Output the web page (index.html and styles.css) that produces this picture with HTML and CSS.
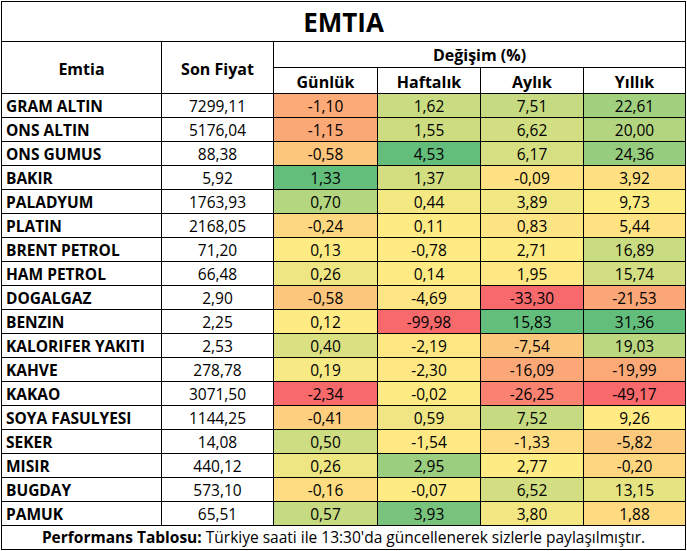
FILE: index.html
```html
<!DOCTYPE html>
<html lang="tr">
<head>
<meta charset="utf-8">
<title>EMTIA</title>
<link rel="stylesheet" href="styles.css">
</head>
<body>
<div class="sheet">
  <div class="title">EMTIA</div>
  <div class="hd hd-name">Emtia</div>
  <div class="hd hd-price">Son Fiyat</div>
  <div class="hd hd-change">Değişim (%)</div>
  <div class="hd sub">Günlük</div>
  <div class="hd sub">Haftalık</div>
  <div class="hd sub">Aylık</div>
  <div class="hd sub">Yıllık</div>

  <div class="row"><div class="name">GRAM ALTIN</div><div class="price">7299,11</div><div class="v">-1,10</div><div class="v">1,62</div><div class="v">7,51</div><div class="v">22,61</div></div>
  <div class="row"><div class="name">ONS ALTIN</div><div class="price">5176,04</div><div class="v">-1,15</div><div class="v">1,55</div><div class="v">6,62</div><div class="v">20,00</div></div>
  <div class="row"><div class="name">ONS GUMUS</div><div class="price">88,38</div><div class="v">-0,58</div><div class="v">4,53</div><div class="v">6,17</div><div class="v">24,36</div></div>
  <div class="row"><div class="name">BAKIR</div><div class="price">5,92</div><div class="v">1,33</div><div class="v">1,37</div><div class="v">-0,09</div><div class="v">3,92</div></div>
  <div class="row"><div class="name">PALADYUM</div><div class="price">1763,93</div><div class="v">0,70</div><div class="v">0,44</div><div class="v">3,89</div><div class="v">9,73</div></div>
  <div class="row"><div class="name">PLATIN</div><div class="price">2168,05</div><div class="v">-0,24</div><div class="v">0,11</div><div class="v">0,83</div><div class="v">5,44</div></div>
  <div class="row"><div class="name">BRENT PETROL</div><div class="price">71,20</div><div class="v">0,13</div><div class="v">-0,78</div><div class="v">2,71</div><div class="v">16,89</div></div>
  <div class="row"><div class="name">HAM PETROL</div><div class="price">66,48</div><div class="v">0,26</div><div class="v">0,14</div><div class="v">1,95</div><div class="v">15,74</div></div>
  <div class="row"><div class="name">DOGALGAZ</div><div class="price">2,90</div><div class="v">-0,58</div><div class="v">-4,69</div><div class="v">-33,30</div><div class="v">-21,53</div></div>
  <div class="row"><div class="name">BENZIN</div><div class="price">2,25</div><div class="v">0,12</div><div class="v">-99,98</div><div class="v">15,83</div><div class="v">31,36</div></div>
  <div class="row"><div class="name">KALORIFER YAKITI</div><div class="price">2,53</div><div class="v">0,40</div><div class="v">-2,19</div><div class="v">-7,54</div><div class="v">19,03</div></div>
  <div class="row"><div class="name">KAHVE</div><div class="price">278,78</div><div class="v">0,19</div><div class="v">-2,30</div><div class="v">-16,09</div><div class="v">-19,99</div></div>
  <div class="row"><div class="name">KAKAO</div><div class="price">3071,50</div><div class="v">-2,34</div><div class="v">-0,02</div><div class="v">-26,25</div><div class="v">-49,17</div></div>
  <div class="row"><div class="name">SOYA FASULYESI</div><div class="price">1144,25</div><div class="v">-0,41</div><div class="v">0,59</div><div class="v">7,52</div><div class="v">9,26</div></div>
  <div class="row"><div class="name">SEKER</div><div class="price">14,08</div><div class="v">0,50</div><div class="v">-1,54</div><div class="v">-1,33</div><div class="v">-5,82</div></div>
  <div class="row"><div class="name">MISIR</div><div class="price">440,12</div><div class="v">0,26</div><div class="v">2,95</div><div class="v">2,77</div><div class="v">-0,20</div></div>
  <div class="row"><div class="name">BUGDAY</div><div class="price">573,10</div><div class="v">-0,16</div><div class="v">-0,07</div><div class="v">6,52</div><div class="v">13,15</div></div>
  <div class="row"><div class="name">PAMUK</div><div class="price">65,51</div><div class="v">0,57</div><div class="v">3,93</div><div class="v">3,80</div><div class="v">1,88</div></div>

  <div class="foot"><b>Performans Tablosu:</b> Türkiye saati ile 13:30'da güncellenerek sizlerle paylaşılmıştır.</div>
</div>
<script src="script.js"></script>
</body>
</html>
```

FILE: styles.css
```css
html, body {
  margin: 0;
  background: #ffffff;
}
body {
  padding: 1px 0 0 1px;
  font-family: "Open Sans", "Liberation Sans", sans-serif;
  color: #000000;
}
.sheet {
  display: grid;
  box-sizing: border-box;
  width: 685px;
  grid-template-columns: 159px 111px 103px 102px 102px 101px;
  grid-template-rows: 39px 25px 25px repeat(18, 23px) 23px;
  gap: 1px;
  padding: 1px;
  background: #000000;
}
.sheet > div:not(.row),
.row > div {
  background: #ffffff;
  overflow: hidden;
  white-space: nowrap;
}
.row {
  display: contents;
}
.title {
  grid-column: 1 / -1;
  text-align: center;
  font-weight: 700;
  font-size: 26px;
  line-height: 39px;
  padding-top: 1px;
  box-sizing: border-box;
}
.hd {
  display: flex;
  align-items: center;
  justify-content: center;
  font-weight: 700;
  font-size: 16px;
}
.hd-name {
  grid-column: 1;
  grid-row: 2 / 4;
  padding-top: 2px;
}
.hd-price {
  grid-column: 2;
  grid-row: 2 / 4;
  padding-top: 2px;
}
.hd-change {
  grid-column: 3 / 7;
  grid-row: 2;
}
.sub {
  grid-row: 3;
  padding-top: 2px;
}
.name,
.price,
.v {
  font-size: 15.5px;
  line-height: 22px;
  padding-top: 1px;
}
.name {
  font-weight: 700;
  padding-left: 4px;
}
.price,
.v {
  text-align: center;
}
.foot {
  grid-column: 1 / -1;
  text-align: center;
  font-size: 15.5px;
  line-height: 23px;
}
.foot b {
  font-weight: 700;
}
```

FILE: script.js
```js
(function () {
  var RED = [248, 105, 107];
  var YELLOW = [255, 235, 132];
  var GREEN = [99, 190, 123];

  function lerp(a, b, t) {
    return [0, 1, 2].map(function (i) {
      return Math.round(a[i] + (b[i] - a[i]) * t);
    });
  }

  var rows = Array.prototype.slice.call(document.querySelectorAll('.row'));
  for (var c = 0; c < 4; c++) {
    var cells = rows.map(function (r) { return r.children[c + 2]; });
    var vals = cells.map(function (el) {
      return parseFloat(el.textContent.replace(',', '.'));
    });
    var sorted = vals.slice().sort(function (a, b) { return a - b; });
    var n = sorted.length;
    var min = sorted[0];
    var max = sorted[n - 1];
    var pos = (n - 1) * 0.5;
    var lo = Math.floor(pos);
    var mid = sorted[lo] + (sorted[Math.min(lo + 1, n - 1)] - sorted[lo]) * (pos - lo);
    cells.forEach(function (el, i) {
      var v = vals[i];
      var col;
      if (v <= mid) {
        col = lerp(RED, YELLOW, mid === min ? 1 : (v - min) / (mid - min));
      } else {
        col = lerp(YELLOW, GREEN, max === mid ? 0 : (v - mid) / (max - mid));
      }
      el.style.backgroundColor = 'rgb(' + col.join(',') + ')';
    });
  }
})();
```
